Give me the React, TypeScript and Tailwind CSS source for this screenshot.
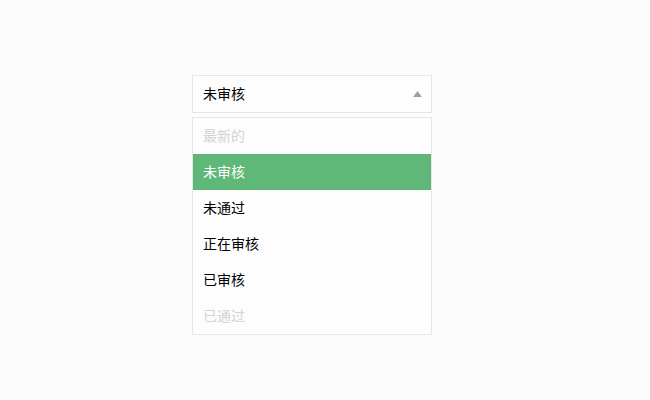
const options = [
  { label: "最新的", disabled: true },
  { label: "未审核", selected: true },
  { label: "未通过" },
  { label: "正在审核" },
  { label: "已审核" },
  { label: "已通过", disabled: true },
];

export default function App() {
  return (
    <div
      className="min-h-[400px] w-[650px] bg-[#fcfcfc] pt-[75px] text-[14px]"
      style={{ fontFamily: '"Liberation Sans", "Noto Sans CJK SC", sans-serif' }}
    >
      <div className="ml-[192px] w-[240px]">
        <div className="flex h-[38px] items-center justify-between border border-[#e6e6e6] bg-[#fdfdfd] pl-[10px] pr-[9px] text-black">
          <span>未审核</span>
          <svg width="9" height="6" viewBox="0 0 9 6">
            <polygon points="4.5,0 9,6 0,6" fill="#a0a0a0" />
          </svg>
        </div>
        <ul className="mt-1 border border-[#e6e6e6] bg-[#fdfdfd]">
          {options.map((o) => (
            <li
              key={o.label}
              className={
                o.selected
                  ? "h-9 bg-[#5fb878] px-[10px] leading-9 text-white"
                  : o.disabled
                    ? "h-9 px-[10px] leading-9 text-[#d2d2d2]"
                    : "h-9 px-[10px] leading-9 text-black"
              }
            >
              {o.label}
            </li>
          ))}
        </ul>
      </div>
    </div>
  );
}
